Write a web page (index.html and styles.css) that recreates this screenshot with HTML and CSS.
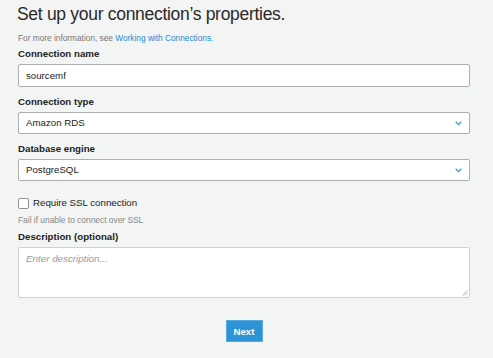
FILE: index.html
```html
<!DOCTYPE html>
<html lang="en">
<head>
    <meta charset="UTF-8">
    <meta name="viewport" content="width=device-width, initial-scale=1.0">
    <title>Connection properties</title>
    <link rel="stylesheet" href="styles.css">
</head>
<body>
    <div class="page">
        <h1 class="page-title">Set up your connection’s properties.</h1>
        <p class="info">For more information, see <a href="#">Working with Connections.</a></p>

        <div class="field">
            <label class="field-label">Connection name</label>
            <div class="input">sourcemf</div>
        </div>

        <div class="field">
            <label class="field-label">Connection type</label>
            <div class="input select">
                <span>Amazon RDS</span>
                <svg class="chevron" width="7" height="5" viewBox="0 0 7 5"><path d="M0.7 0.8l2.8 2.8 2.8-2.8" fill="none" stroke="#3a9ad9" stroke-width="1.3"/></svg>
            </div>
        </div>

        <div class="field">
            <label class="field-label">Database engine</label>
            <div class="input select">
                <span>PostgreSQL</span>
                <svg class="chevron" width="7" height="5" viewBox="0 0 7 5"><path d="M0.7 0.8l2.8 2.8 2.8-2.8" fill="none" stroke="#3a9ad9" stroke-width="1.3"/></svg>
            </div>
        </div>

        <div class="check-row">
            <span class="checkbox"></span>
            <span>Require SSL connection</span>
        </div>
        <p class="hint">Fail if unable to connect over SSL</p>

        <div class="field field-desc">
            <label class="field-label">Description (optional)</label>
            <div class="textarea">
                <span class="placeholder">Enter description...</span>
                <svg class="grip" width="6" height="6" viewBox="0 0 6 6"><path d="M0.5 5.5L5.5 0.5M3 5.5L5.5 3" stroke="#999" stroke-width="0.8"/></svg>
            </div>
        </div>

        <div class="actions">
            <button class="btn-primary">Next</button>
        </div>
    </div>
</body>
</html>
```

FILE: styles.css
```css
* {
    margin: 0;
    padding: 0;
    box-sizing: border-box;
}

body {
    background-color: #f3f4f4;
    color: #222;
    font-family: "Liberation Sans", Arial, sans-serif;
}

.page {
    width: 452px;
    margin-left: 18px;
    padding-top: 3px;
}

.page-title {
    font-size: 17.5px;
    font-weight: 400;
    letter-spacing: -0.3px;
    line-height: 22px;
    color: #2a2a2a;
    margin-left: -1px;
}

.info {
    font-size: 8.3px;
    line-height: 12px;
    color: #777;
    margin-top: 7px;
}

.info a {
    color: #2a8ad1;
    text-decoration: none;
}

.field {
    margin-top: 4px;
}

.field + .field {
    margin-top: 9px;
}

.field-label {
    display: block;
    font-size: 9.7px;
    font-weight: 700;
    line-height: 12px;
    color: #222;
    margin-bottom: 4px;
}

.input {
    height: 23px;
    background: #fff;
    border: 1px solid #abb0b2;
    border-radius: 2px;
    font-size: 9.7px;
    line-height: 21px;
    padding: 0 7px;
    color: #222;
}

.select {
    display: flex;
    align-items: center;
    justify-content: space-between;
    height: 22px;
    line-height: 20px;
}

.check-row {
    display: flex;
    align-items: center;
    gap: 4px;
    margin-top: 16px;
    font-size: 9.7px;
    line-height: 12px;
}

.checkbox {
    width: 11px;
    height: 11px;
    background: #fff;
    border: 1px solid #8c9296;
    border-radius: 2px;
}

.hint {
    font-size: 8.4px;
    color: #888;
    margin-top: 5px;
    line-height: 12px;
}

.field-desc {
    margin-top: 5px;
}

.textarea {
    position: relative;
    height: 51px;
    background: #fff;
    border: 1px solid #cfd3d5;
    border-radius: 2px;
    padding: 5px 7px;
    font-size: 9.8px;
    line-height: 12px;
}

.placeholder {
    color: #999;
    font-style: italic;
}

.grip {
    position: absolute;
    right: 1px;
    bottom: 1px;
}

.actions {
    display: flex;
    justify-content: center;
    margin-top: 22px;
}

.btn-primary {
    width: 37px;
    height: 22px;
    background: #2d93d5;
    color: #fff;
    border: 1px solid #5aa9de;
    font-family: inherit;
    font-size: 9.6px;
    font-weight: 700;
}
```
